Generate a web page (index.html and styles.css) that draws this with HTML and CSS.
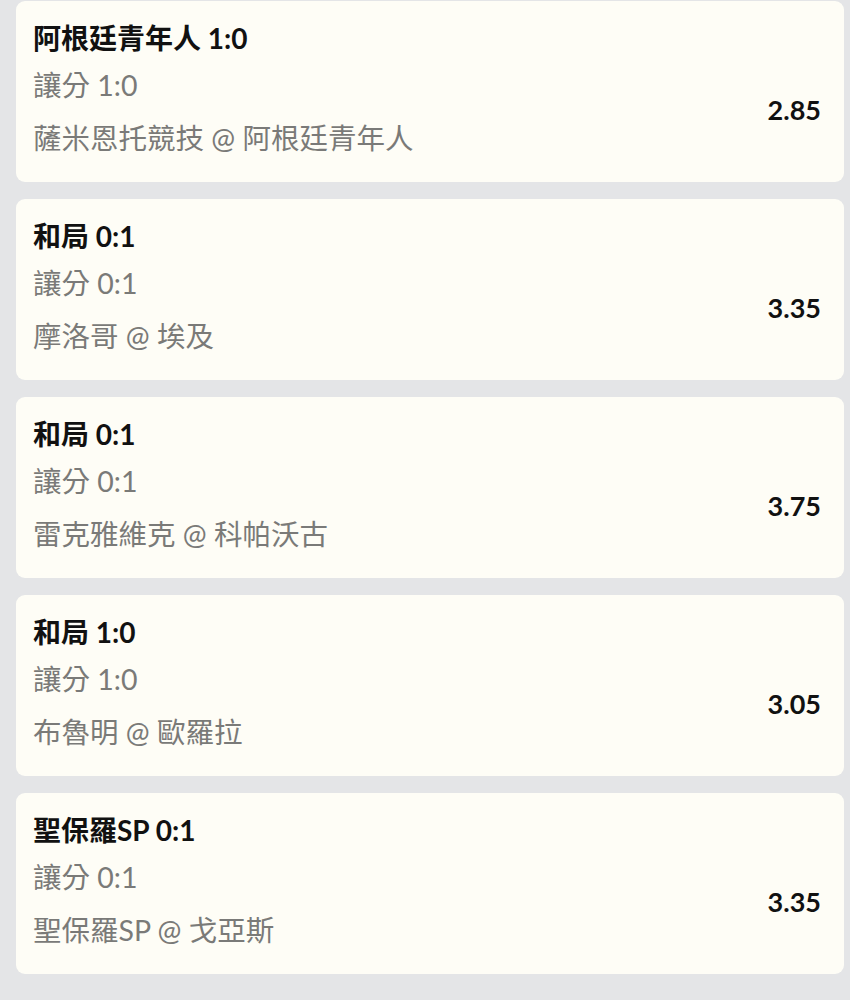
FILE: index.html
```html
<!DOCTYPE html>
<html lang="zh-Hant">
<head>
  <meta charset="UTF-8">
  <meta name="viewport" content="width=device-width, initial-scale=1.0">
  <title>投注單</title>
  <link rel="stylesheet" href="styles.css">
</head>
<body>

<div class="bet-list">
  <div class="bet-card">
    <div class="bet-info">
      <div class="bet-pick">阿根廷青年人 1:0</div>
      <div class="bet-market">讓分 1:0</div>
      <div class="bet-match">薩米恩托競技 @ 阿根廷青年人</div>
    </div>
    <div class="bet-odds">2.85</div>
  </div>

  <div class="bet-card">
    <div class="bet-info">
      <div class="bet-pick">和局 0:1</div>
      <div class="bet-market">讓分 0:1</div>
      <div class="bet-match">摩洛哥 @ 埃及</div>
    </div>
    <div class="bet-odds">3.35</div>
  </div>

  <div class="bet-card">
    <div class="bet-info">
      <div class="bet-pick">和局 0:1</div>
      <div class="bet-market">讓分 0:1</div>
      <div class="bet-match">雷克雅維克 @ 科帕沃古</div>
    </div>
    <div class="bet-odds">3.75</div>
  </div>

  <div class="bet-card">
    <div class="bet-info">
      <div class="bet-pick">和局 1:0</div>
      <div class="bet-market">讓分 1:0</div>
      <div class="bet-match">布魯明 @ 歐羅拉</div>
    </div>
    <div class="bet-odds">3.05</div>
  </div>

  <div class="bet-card">
    <div class="bet-info">
      <div class="bet-pick">聖保羅SP 0:1</div>
      <div class="bet-market">讓分 0:1</div>
      <div class="bet-match">聖保羅SP @ 戈亞斯</div>
    </div>
    <div class="bet-odds">3.35</div>
  </div>
</div>

</body>
</html>
```

FILE: styles.css
```css
body {
  background: #e4e5e7;
  font-family: Lato, "Noto Sans CJK TC", sans-serif;
  margin: 0;
  padding: 0;
}
.bet-list {
  display: flex;
  flex-direction: column;
  gap: 17px;
  padding: 1px 6px 0 16px;
}
.bet-card {
  display: flex;
  align-items: center;
  justify-content: space-between;
  background: #fefdf6;
  border-radius: 9px;
  padding: 17px 23px 24px 17px;
}
.bet-pick {
  font-size: 28px;
  font-weight: bold;
  line-height: 40px;
  color: #111;
}
.bet-market {
  font-size: 28.5px;
  line-height: 40px;
  margin-top: 7px;
  color: #7a7a78;
}
.bet-match {
  font-size: 28.5px;
  line-height: 40px;
  margin-top: 13px;
  color: #7a7a78;
}
.bet-odds {
  font-size: 27px;
  font-weight: bold;
  color: #111;
  margin-top: 42px;
}
```
